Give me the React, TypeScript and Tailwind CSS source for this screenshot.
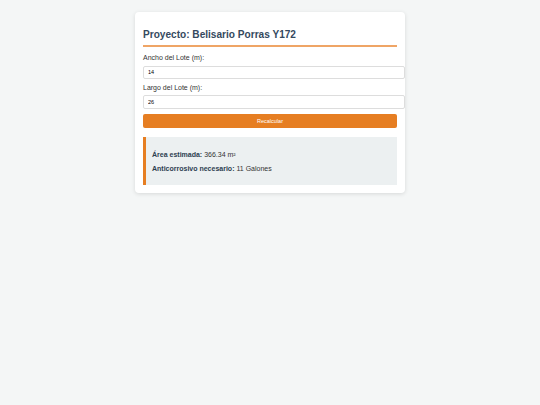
import React from "react";

export default function App() {
  return (
    <div className="min-h-[405px] w-[540px] bg-[#f4f6f6] pt-[12px] font-['Liberation_Sans',Arial,sans-serif]">
      <div className="ml-[135px] w-[270px] rounded-[4px] bg-white px-[8px] pt-[16px] pb-[8px] shadow-[0_1px_4px_rgba(0,0,0,0.12)]">
        <h1 className="border-b-2 border-[#efa566] pb-[3px] text-[10.1px] leading-[14px] font-bold text-[#34495e]">
          Proyecto: Belisario Porras Y172
        </h1>
        <label className="mt-[5.5px] block text-[7px] leading-[9px] text-[#333]">Ancho del Lote (m):</label>
        <input
          readOnly
          value="14"
          className="mt-[4px] box-content block h-[11.5px] w-[252px] rounded-[2px] border border-[#ddd] px-[4px] text-[5.5px] text-black outline-none"
        />
        <label className="mt-[3.5px] block text-[7px] leading-[9px] text-[#333]">Largo del Lote (m):</label>
        <input
          readOnly
          value="26"
          className="mt-[3.5px] box-content block h-[12px] w-[252px] rounded-[2px] border border-[#ddd] px-[4px] text-[5.5px] text-black outline-none"
        />
        <button className="mt-[5px] block h-[14px] w-full rounded-[2px] bg-[#e67e22] text-[5.5px] text-white">
          Recalcular
        </button>
        <div className="mt-[9px] flex h-[48px] flex-col justify-center gap-[5px] border-l-[3px] border-[#e67e22] bg-[#ecf0f1] pl-[6px] text-[7px] leading-[9px] text-[#333]">
          <p>
            <strong className="text-[#2c3e50]">Área estimada:</strong> 366.34 m²
          </p>
          <p>
            <strong className="text-[#2c3e50]">Anticorrosivo necesario:</strong> 11 Galones
          </p>
        </div>
      </div>
    </div>
  );
}
